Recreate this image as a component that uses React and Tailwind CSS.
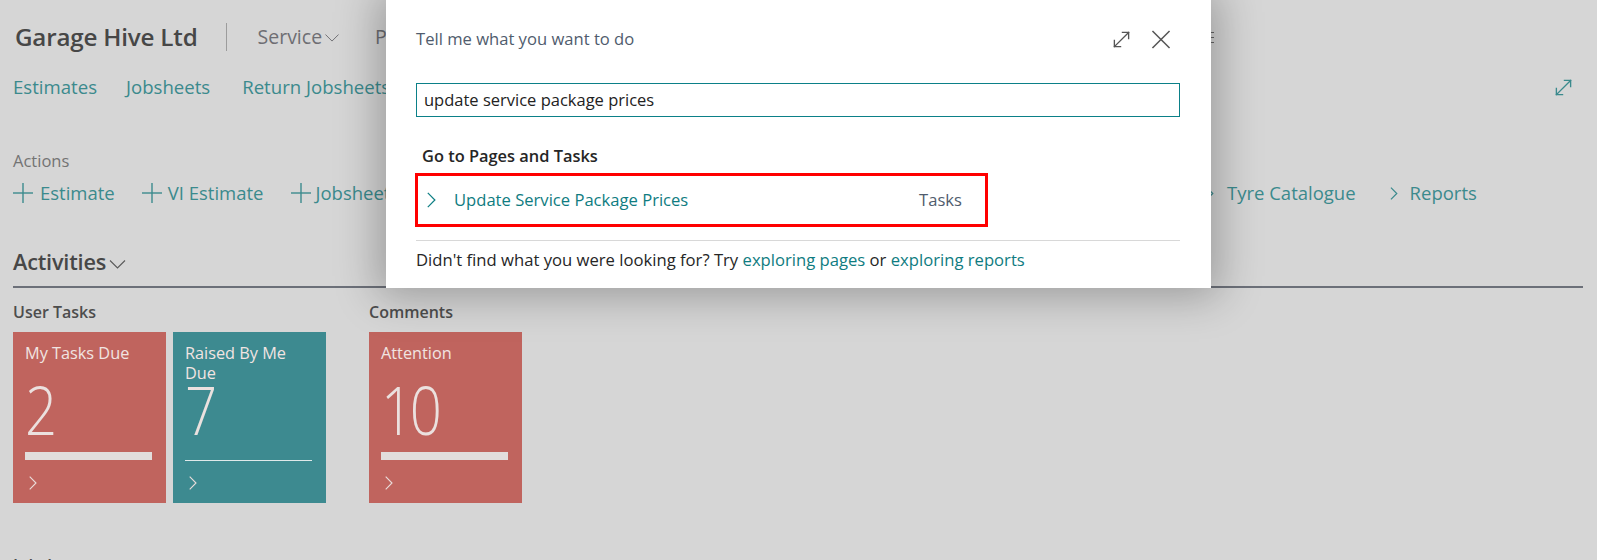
import React from "react";

const ExpandIcon = ({ className = "", color = "#555" }) => (
  <svg viewBox="0 0 20 20" className={className} fill="none" stroke={color} strokeWidth="1.4" strokeLinecap="square">
    <line x1="2.5" y1="17.5" x2="17.5" y2="2.5" />
    <polyline points="11,2.5 17.5,2.5 17.5,9" />
    <polyline points="2.5,11 2.5,17.5 9,17.5" />
  </svg>
);

const CloseIcon = ({ className = "" }) => (
  <svg viewBox="0 0 20 20" className={className} fill="none" stroke="#555" strokeWidth="1.6">
    <line x1="1" y1="1" x2="19" y2="19" />
    <line x1="19" y1="1" x2="1" y2="19" />
  </svg>
);

const ChevronDown = ({ className = "", color = "#6e6e73" }) => (
  <svg viewBox="0 0 16 9" className={className} fill="none" stroke={color} strokeWidth="1.1">
    <polyline points="0.5,0.5 8,8 15.5,0.5" />
  </svg>
);

const ChevronRight = ({ className = "", color = "#3b8a8d", sw = "1.3" }) => (
  <svg viewBox="0 0 8 14" className={className} fill="none" stroke={color} strokeWidth={sw}>
    <polyline points="0.7,0.7 7,7 0.7,13.3" />
  </svg>
);

const Plus = ({ className = "" }) => (
  <svg viewBox="0 0 20 20" className={className} fill="none" stroke="#3b8a8d" strokeWidth="1.4">
    <line x1="10" y1="0" x2="10" y2="20" />
    <line x1="0" y1="10" x2="20" y2="10" />
  </svg>
);

const Tile = ({ title, value, color, bar }) => (
  <div className={`w-[153px] h-[171px] ${color} pl-[12px] pt-[11px] flex flex-col`}>
    <div className="h-[33px] w-[128px] text-[16.3px] leading-[20px] text-[#f1e4e2]">{title}</div>
    <div className="h-[67px] text-[67px] leading-none font-light text-[#ebe1df] tracking-[-4px] scale-x-[0.84] origin-left">{value}</div>
    <div className="mt-[9px] h-[9px] w-[127px]">
      {bar === "solid" ? (
        <div className="h-[8px] w-full bg-[#e2dddc]" />
      ) : (
        <div className="h-[9px] w-full border-b border-[#dfe9ea]" />
      )}
    </div>
    <ChevronRight className="mt-[15px] ml-[4px] w-[8px] h-[14px]" color="#eadddb" sw="1.1" />
  </div>
);

export default function App() {
  return (
    <div className="relative w-[1597px] h-[560px] overflow-hidden bg-[#d6d6d6] font-['Open_Sans','Noto_Sans',sans-serif]">
      {/* background page */}
      <div className="pl-[13px] pr-[14px]">
        {/* Row 1 */}
        <div className="h-[74px] flex items-center w-[1201px]">
          <span className="ml-[2px] text-[24.2px] font-semibold text-[#474747] tracking-[-0.2px]">Garage Hive Ltd</span>
          <div className="ml-[28px] w-px h-[28px] bg-[#9c9c9c]" />
          <span className="ml-[31px] text-[19.5px] text-[#6e6e73]">Service</span>
          <ChevronDown className="ml-[3px] mt-[2px] w-[14px] h-[8px]" />
          <span className="ml-[36px] text-[19.5px] text-[#6e6e73]">Purchases</span>
          <div className="ml-auto flex flex-col gap-[4px] w-[9px]">
            <div className="h-px bg-[#666]" />
            <div className="h-px bg-[#666]" />
            <div className="h-px bg-[#666]" />
          </div>
        </div>
        {/* Row 2 */}
        <div className="h-[26px] flex items-center text-[18.6px] text-[#3b8a8d]">
          <span>Estimates</span>
          <span className="ml-[29px]">Jobsheets</span>
          <span className="ml-[32px]">Return Jobsheets</span>
          <ExpandIcon className="ml-auto mr-[10px] w-[19px] h-[19px]" color="#3b8a8d" />
        </div>
        {/* Actions label */}
        <div className="mt-[51px] h-[20px] flex items-center text-[16.5px] text-[#737373]">Actions</div>
        {/* Actions row */}
        <div className="mt-[9px] h-[26px] flex items-center text-[18.5px] text-[#3b8a8d]">
          <div className="w-[1193px] flex items-center">
            <Plus className="w-[20px] h-[20px]" />
            <span className="ml-[7px]">Estimate</span>
            <Plus className="ml-[27px] w-[20px] h-[20px]" />
            <span className="ml-[6px]">VI Estimate</span>
            <Plus className="ml-[27px] w-[20px] h-[20px]" />
            <span className="ml-[5px]">Jobsheet</span>
          </div>
          <ChevronRight className="w-[8px] h-[13px]" />
          <span className="ml-[13px]">Tyre Catalogue</span>
          <ChevronRight className="ml-[34px] w-[8px] h-[13px]" />
          <span className="ml-[12px]">Reports</span>
        </div>
        {/* Activities */}
        <div className="mt-[41px] h-[41px] border-b-2 border-[#6c7079]">
          <div className="h-[30px] flex items-center">
            <span className="text-[21.7px] font-semibold text-[#474747] tracking-[-0.2px]">Activities</span>
            <ChevronDown className="ml-[3px] mt-[4px] w-[17px] h-[9px]" color="#5a5a5a" />
          </div>
        </div>
        {/* Cues */}
        <div className="flex mt-[14px] gap-[43px]">
          <div className="flex flex-col w-[313px]">
            <div className="h-[20px] flex items-center text-[16px] font-semibold text-[#4d4d4d]">User Tasks</div>
            <div className="mt-[10px] flex gap-[7px]">
              <Tile title="My Tasks Due" value="2" color="bg-[#c0645e]" bar="solid" />
              <Tile title="Raised By Me Due" value="7" color="bg-[#3d8a90]" bar="line" />
            </div>
          </div>
          <div className="flex flex-col">
            <div className="h-[20px] flex items-center text-[16px] font-semibold text-[#4d4d4d]">Comments</div>
            <div className="mt-[10px] flex">
              <Tile title="Attention" value="10" color="bg-[#c0645e]" bar="solid" />
            </div>
          </div>
        </div>
        <div className="mt-[49px] h-[22px] text-[17px] font-semibold text-[#4d4d4d]">Jobsheets</div>
      </div>

      {/* Tell me dialog */}
      <div className="absolute left-[386px] top-0 w-[825px] h-[288px] bg-white shadow-[0_0_40px_8px_rgba(0,0,0,0.28)] pl-[30px] pr-[31px] flex flex-col">
        <div className="h-[78px] flex items-center">
          <span className="text-[16.6px] text-[#505c6d]">Tell me what you want to do</span>
          <ExpandIcon className="ml-auto w-[19px] h-[19px]" color="#555" />
          <CloseIcon className="ml-[20px] mr-[9px] w-[20px] h-[19px]" />
        </div>
        <div className="mt-[5px] h-[34px] border border-[#0b8088] flex items-center pl-[7px] text-[16.5px] text-[#222]">
          update service package prices
        </div>
        <div className="mt-[28px] h-[22px] pl-[6px] flex items-center text-[16.4px] font-semibold text-[#262626]">
          Go to Pages and Tasks
        </div>
        <div className="mt-[6px] ml-[-1px] w-[573px] h-[54px] border-[3px] border-[#ff0000] flex items-center pl-[9px] pr-[23px] text-[16.6px]">
          <ChevronRight className="w-[9px] h-[16px]" color="#0f7f84" sw="1.1" />
          <span className="ml-[18px] text-[#0f7c81]">Update Service Package Prices</span>
          <span className="ml-auto text-[#505c6d]">Tasks</span>
        </div>
        <div className="mt-[13px] border-t border-[#d8d8d8]" />
        <div className="mt-[8px] h-[22px] flex items-center text-[16.65px] text-[#262626] whitespace-pre">
          <span>Didn't find what you were looking for? Try </span>
          <span className="text-[#0f7c81]">exploring pages</span>
          <span> or </span>
          <span className="text-[#0f7c81]">exploring reports</span>
        </div>
      </div>
    </div>
  );
}
